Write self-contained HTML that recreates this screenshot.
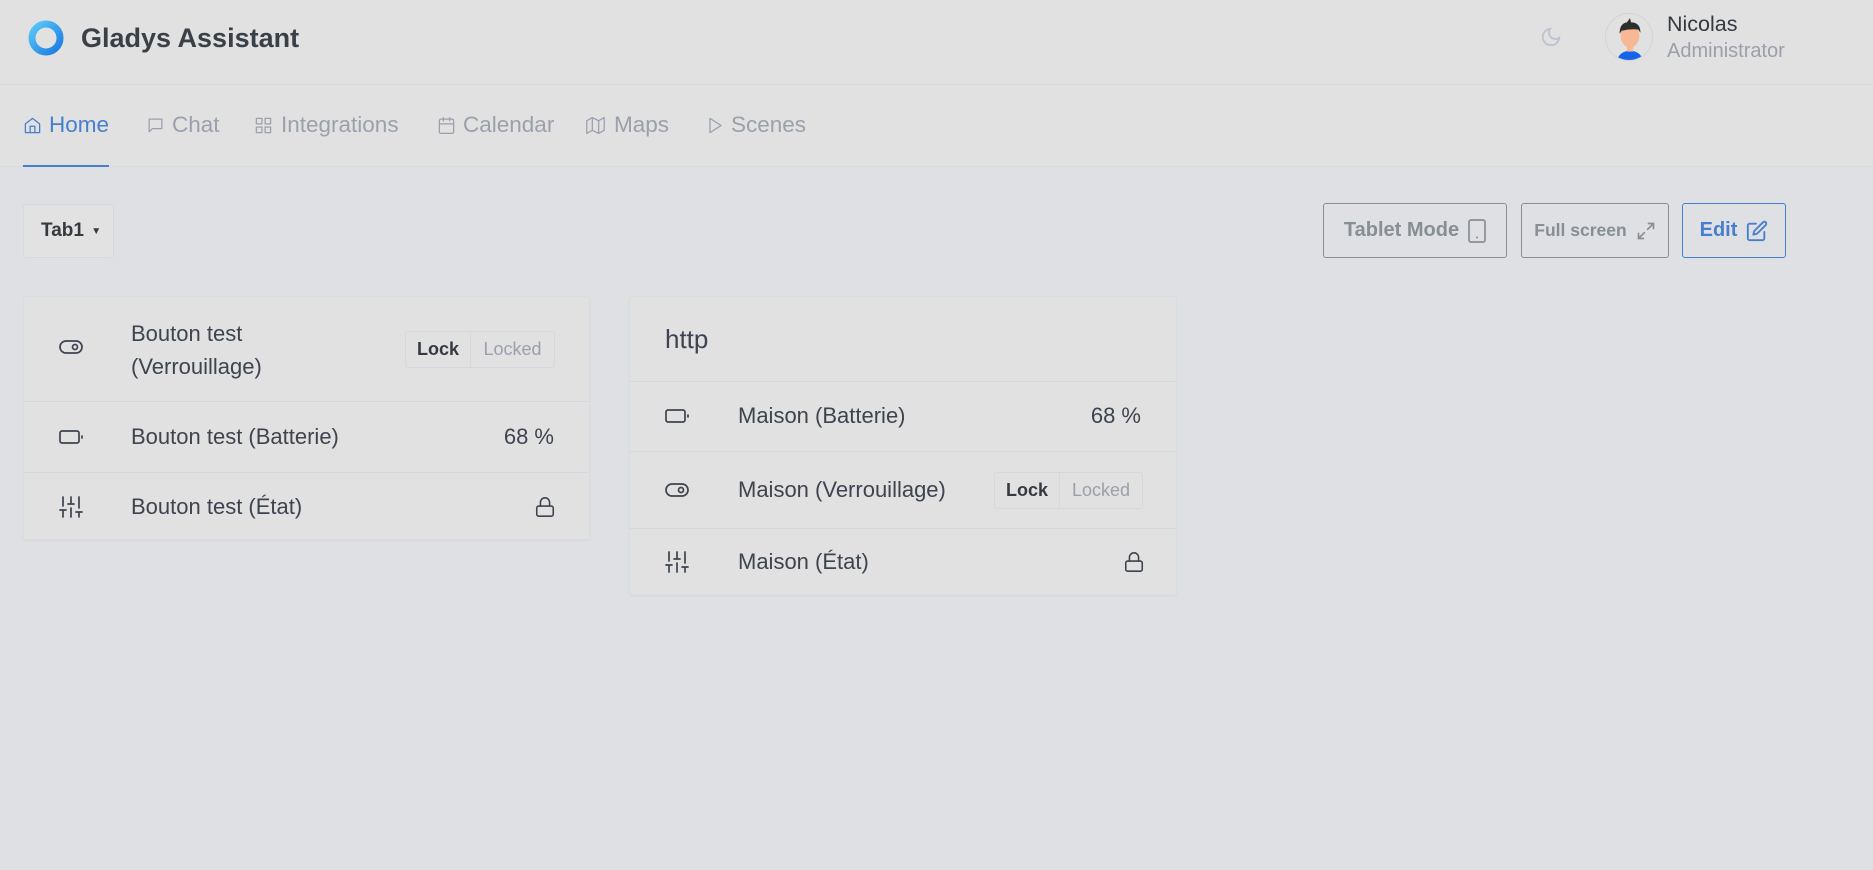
<!DOCTYPE html>
<html><head><meta charset="utf-8"><style>
*{box-sizing:border-box;margin:0;padding:0}
body{width:1873px;height:870px;overflow:hidden;background:#dfe0e3;font-family:"Liberation Sans",sans-serif;color:#3d4450;position:relative}
.abs{position:absolute}
.hdr{left:0;top:0;width:1873px;height:85px;background:#e1e1e1;border-bottom:1px solid #d6dbe3}
.nav{left:0;top:85px;width:1873px;height:82px;background:#e1e1e1;border-bottom:1px solid #d6dbe3}
.nt{position:absolute;top:25px;font-size:22.5px;line-height:30px;color:#9aa0ac;white-space:nowrap}
.nic{position:absolute;top:31px;width:19px;height:19px;fill:none;stroke:#9aa0ac;stroke-width:1.6;stroke-linecap:round;stroke-linejoin:round}
.btn{position:absolute;top:203px;height:55px;border:1px solid #868e96;border-radius:3px;display:flex;align-items:center;justify-content:center;gap:9px;font-size:20px;color:#868e96;font-weight:bold}
.card{position:absolute;background:#e1e1e1;border:1px solid #d9dce1;border-radius:3px;box-shadow:0 1px 2px rgba(0,0,0,.04)}
.row{position:absolute;left:0;right:0;border-top:1px solid #d4d7dc}
.t{position:absolute;font-size:22px;line-height:30px;color:#3d4450;white-space:nowrap}
.ic{position:absolute;fill:none;stroke:#3d4450;stroke-width:1.7;stroke-linecap:round;stroke-linejoin:round}
.grp{position:absolute;height:37px;border:1px solid #d6d8dd;border-radius:3px;display:flex;font-size:18px}
.grp span{display:flex;align-items:center;justify-content:center}
</style></head><body>
<div class="abs hdr">
 <svg class="abs" style="left:26px;top:19px" width="40" height="38" viewBox="0 0 40 38"><defs><linearGradient id="g" x1="0" y1="0" x2="1" y2="1"><stop offset="0" stop-color="#5ac8fa"/><stop offset="1" stop-color="#1a7be0"/></linearGradient></defs><circle cx="20" cy="19" r="14" fill="none" stroke="url(#g)" stroke-width="7"/></svg>
 <div class="abs" style="left:81px;top:22px;font-size:27px;line-height:32px;font-weight:bold;color:#3a4048">Gladys Assistant</div>
 <svg class="abs" style="left:1540px;top:26px" width="22" height="22" viewBox="0 0 24 24"><path d="M21 12.8A9 9 0 1 1 11.2 3 7 7 0 0 0 21 12.8z" fill="none" stroke="#bcc4d0" stroke-width="2"/></svg>
 <div class="abs" style="left:1605px;top:13px;width:48px;height:48px;border-radius:50%;border:1px solid #d4d4d4;overflow:hidden">
  <svg width="48" height="48" viewBox="0 0 46 46"><path d="M10 46 Q12 36 23 35 Q34 36 36 46Z" fill="#1565e8"/><rect x="20" y="28" width="6" height="8" fill="#f9b894"/><ellipse cx="23" cy="21" rx="9" ry="11" fill="#f9b894"/><path d="M13 19 Q13 9 20 8 L23 4 L24 8 Q33 8 33 18 L31 15 Q24 14 15 16Z" fill="#2e2e2e"/></svg>
 </div>
 <div class="abs" style="left:1667px;top:10px;font-size:21.5px;line-height:28px;color:#343a40">Nicolas</div>
 <div class="abs" style="left:1667px;top:38px;font-size:20px;line-height:26px;color:#9aa0ac">Administrator</div>
</div>
<div class="abs nav">
 <svg class="nic" style="left:23px;stroke:#467fcf" viewBox="0 0 24 24"><path d="M3 10l9-7 9 7v11H3z"/><path d="M9 21v-8h6v8"/></svg>
 <div class="nt" style="left:49px;color:#467fcf">Home</div>
 <div class="abs" style="left:23px;top:80px;width:86px;height:2px;background:#467fcf"></div>
 <svg class="nic" style="left:146px" viewBox="0 0 24 24"><path d="M4 4h16v12H8l-4 4z"/></svg>
 <div class="nt" style="left:172px">Chat</div>
 <svg class="nic" style="left:254px" viewBox="0 0 24 24"><rect x="3" y="3" width="7" height="7"/><rect x="14" y="3" width="7" height="7"/><rect x="3" y="14" width="7" height="7"/><rect x="14" y="14" width="7" height="7"/></svg>
 <div class="nt" style="left:281px">Integrations</div>
 <svg class="nic" style="left:437px" viewBox="0 0 24 24"><rect x="3" y="4" width="18" height="18" rx="2"/><path d="M16 2v4M8 2v4M3 10h18"/></svg>
 <div class="nt" style="left:463px">Calendar</div>
 <svg class="nic" style="left:586px" viewBox="0 0 24 24"><path d="M1 6v16l7-4 8 4 7-4V2l-7 4-8-4z"/><path d="M8 2v16M16 6v16"/></svg>
 <div class="nt" style="left:614px">Maps</div>
 <svg class="nic" style="left:706px" viewBox="0 0 24 24"><path d="M5 3l14 9-14 9z"/></svg>
 <div class="nt" style="left:731px">Scenes</div>
</div>
<div class="abs" style="left:23px;top:204px;width:91px;height:54px;border:1px solid #d6d8dd;border-radius:3px;background:#e2e2e2;font-size:19px;line-height:52px;font-weight:bold;color:#343a40;padding-left:17px">Tab1 <span style="font-size:10px;margin-left:2px;vertical-align:2px">▼</span></div>
<div class="btn" style="left:1323px;width:184px">Tablet Mode <svg width="18" height="24" viewBox="0 0 18 24"><rect x="1" y="1" width="16" height="22" rx="2" fill="none" stroke="#868e96" stroke-width="1.7"/><circle cx="9" cy="18.5" r="1" fill="#868e96"/></svg></div>
<div class="btn" style="left:1521px;width:148px;font-size:17.5px">Full screen <svg width="20" height="20" viewBox="0 0 24 24" fill="none" stroke="#868e96" stroke-width="2" stroke-linecap="round"><path d="M15 3h6v6M9 21H3v-6M21 3l-7 7M3 21l7-7"/></svg></div>
<div class="btn" style="left:1682px;width:104px;border-color:#467fcf;color:#467fcf">Edit <svg width="22" height="22" viewBox="0 0 24 24" fill="none" stroke="#467fcf" stroke-width="2" stroke-linecap="round" stroke-linejoin="round"><path d="M11 4H4a2 2 0 0 0-2 2v14a2 2 0 0 0 2 2h14a2 2 0 0 0 2-2v-7"/><path d="M18.5 2.5a2.1 2.1 0 0 1 3 3L12 15l-4 1 1-4z"/></svg></div>

<div class="card" style="left:23px;top:296px;width:567px;height:244px">
 <svg class="ic" style="left:35px;top:42px" width="24" height="16" viewBox="0 0 24 16"><rect x="1" y="2" width="22" height="12" rx="6"/><circle cx="16" cy="8" r="2.5"/></svg>
 <div class="t" style="left:107px;top:20px;line-height:33px">Bouton test<br>(Verrouillage)</div>
 <div class="grp" style="left:381px;top:34px;width:150px"><span style="width:65px;font-weight:bold;color:#343a40;border-right:1px solid #d6d8dd">Lock</span><span style="flex:1;color:#9aa0ac">Locked</span></div>
 <div class="row" style="top:104px"></div>
 <svg class="ic" style="left:35px;top:132px" width="24" height="16" viewBox="0 0 24 16"><rect x="1" y="2" width="19" height="12" rx="2"/><path d="M23 7v2"/></svg>
 <div class="t" style="left:107px;top:125px">Bouton test (Batterie)</div>
 <div class="t" style="right:35px;top:125px">68 %</div>
 <div class="row" style="top:175px"></div>
 <svg class="ic" style="left:35px;top:199px" width="24" height="22" viewBox="0 0 24 22"><path d="M4 21v-7M4 10V1M12 21v-9M12 8V1M20 21v-5M20 12V1M1 14h6M9 8h6M17 16h6"/></svg>
 <div class="t" style="left:107px;top:195px">Bouton test (État)</div>
 <svg class="ic" style="left:510px;top:199px" width="22" height="22" viewBox="0 0 22 24"><rect x="2" y="11" width="18" height="11" rx="2"/><path d="M6 11V7a5 5 0 0 1 10 0v4"/></svg>
</div>

<div class="card" style="left:629px;top:296px;width:548px;height:299px">
 <div class="t" style="left:35px;top:27px;font-size:26px">http</div>
 <div class="row" style="top:84px"></div>
 <svg class="ic" style="left:35px;top:111px" width="24" height="16" viewBox="0 0 24 16"><rect x="1" y="2" width="19" height="12" rx="2"/><path d="M23 7v2"/></svg>
 <div class="t" style="left:108px;top:104px">Maison (Batterie)</div>
 <div class="t" style="right:35px;top:104px">68 %</div>
 <div class="row" style="top:154px"></div>
 <svg class="ic" style="left:35px;top:185px" width="24" height="16" viewBox="0 0 24 16"><rect x="1" y="2" width="22" height="12" rx="6"/><circle cx="16" cy="8" r="2.5"/></svg>
 <div class="t" style="left:108px;top:178px">Maison (Verrouillage)</div>
 <div class="grp" style="left:364px;top:175px;width:149px"><span style="width:65px;font-weight:bold;color:#343a40;border-right:1px solid #d6d8dd">Lock</span><span style="flex:1;color:#9aa0ac">Locked</span></div>
 <div class="row" style="top:231px"></div>
 <svg class="ic" style="left:35px;top:254px" width="24" height="22" viewBox="0 0 24 22"><path d="M4 21v-7M4 10V1M12 21v-9M12 8V1M20 21v-5M20 12V1M1 14h6M9 8h6M17 16h6"/></svg>
 <div class="t" style="left:108px;top:250px">Maison (État)</div>
 <svg class="ic" style="left:493px;top:254px" width="22" height="22" viewBox="0 0 22 24"><rect x="2" y="11" width="18" height="11" rx="2"/><path d="M6 11V7a5 5 0 0 1 10 0v4"/></svg>
</div>
</body></html>
